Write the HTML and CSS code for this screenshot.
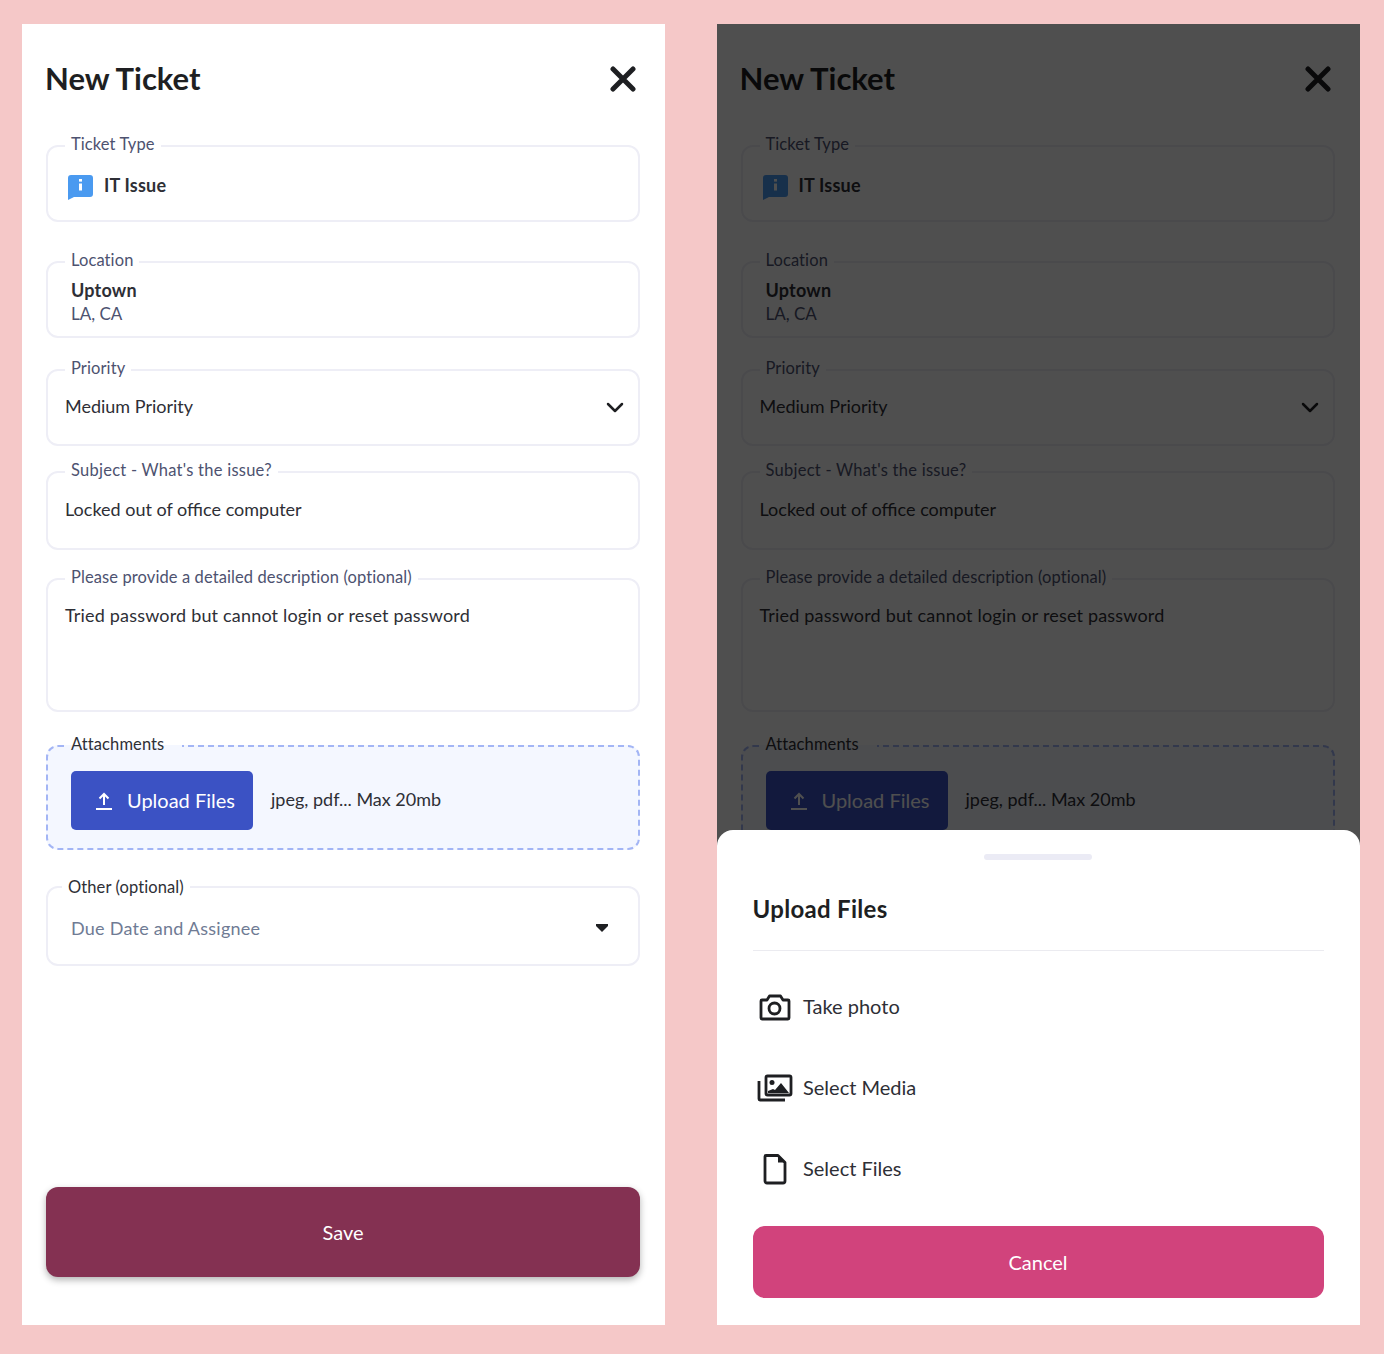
FILE: index.html
```html
<!DOCTYPE html>
<html lang="en">
<head>
<meta charset="UTF-8">
<meta name="viewport" content="width=device-width, initial-scale=1.0">
<title>New Ticket</title>
<link rel="stylesheet" href="styles.css">
</head>
<body>
  <!-- form -->
  <section class="panel">
    <header class="panel-head">
      <h1>New Ticket</h1>
      <svg class="close-icon" viewBox="0 0 26 26"><path d="M3 3l20 20M23 3L3 23"/></svg>
    </header>
    <fieldset class="field">
      <legend>Ticket Type</legend>
      <div class="field-body type-row">
        <svg class="info-icon" viewBox="0 0 26 26"><path d="M4 1h19a3 3 0 0 1 3 3v16a3 3 0 0 1-3 3H7l-6 3V4a3 3 0 0 1 3-3z" fill="#4a9af0"/><rect x="12" y="5" width="3" height="2.6" fill="#fff"/><rect x="12" y="9.5" width="3" height="7" fill="#fff"/></svg>
        <strong>IT Issue</strong>
      </div>
    </fieldset>
    <fieldset class="field field-location">
      <legend>Location</legend>
      <div class="field-body location-body">
        <strong>Uptown</strong>
        <span>LA, CA</span>
      </div>
    </fieldset>
    <fieldset class="field field-priority">
      <legend>Priority</legend>
      <div class="field-body select-row">
        <span>Medium Priority</span>
        <svg class="chevron" viewBox="0 0 18 12"><path d="M2 2l7 7 7-7"/></svg>
      </div>
    </fieldset>
    <fieldset class="field field-subject">
      <legend>Subject - What's the issue?</legend>
      <div class="field-body subject-body">Locked out of office computer</div>
    </fieldset>
    <fieldset class="field field-desc">
      <legend>Please provide a detailed description (optional)</legend>
      <div class="field-body desc-body">Tried password but cannot login or reset password</div>
    </fieldset>
    <fieldset class="field field-attach">
      <legend>Attachments</legend>
      <div class="field-body attach-body">
        <button class="upload-btn">
          <svg class="upload-icon" viewBox="0 0 18 18"><path d="M9 13V2M4.5 6.5L9 2l4.5 4.5M1 17h16"/></svg>
          Upload Files
        </button>
        <span>jpeg, pdf... Max 20mb</span>
      </div>
    </fieldset>
    <fieldset class="field field-other">
      <legend>Other (optional)</legend>
      <div class="field-body other-body">
        <span>Due Date and Assignee</span>
        <svg class="caret" viewBox="0 0 12 8"><path d="M0 0h12v2L6 8 0 2z"/></svg>
      </div>
    </fieldset>
    <button class="save-btn">Save</button>
  </section>

  <!-- same form with the upload sheet open -->
  <section class="panel">
    <header class="panel-head">
      <h1>New Ticket</h1>
      <svg class="close-icon" viewBox="0 0 26 26"><path d="M3 3l20 20M23 3L3 23"/></svg>
    </header>
    <fieldset class="field">
      <legend>Ticket Type</legend>
      <div class="field-body type-row">
        <svg class="info-icon" viewBox="0 0 26 26"><path d="M4 1h19a3 3 0 0 1 3 3v16a3 3 0 0 1-3 3H7l-6 3V4a3 3 0 0 1 3-3z" fill="#4a9af0"/><rect x="12" y="5" width="3" height="2.6" fill="#fff"/><rect x="12" y="9.5" width="3" height="7" fill="#fff"/></svg>
        <strong>IT Issue</strong>
      </div>
    </fieldset>
    <fieldset class="field field-location">
      <legend>Location</legend>
      <div class="field-body location-body">
        <strong>Uptown</strong>
        <span>LA, CA</span>
      </div>
    </fieldset>
    <fieldset class="field field-priority">
      <legend>Priority</legend>
      <div class="field-body select-row">
        <span>Medium Priority</span>
        <svg class="chevron" viewBox="0 0 18 12"><path d="M2 2l7 7 7-7"/></svg>
      </div>
    </fieldset>
    <fieldset class="field field-subject">
      <legend>Subject - What's the issue?</legend>
      <div class="field-body subject-body">Locked out of office computer</div>
    </fieldset>
    <fieldset class="field field-desc">
      <legend>Please provide a detailed description (optional)</legend>
      <div class="field-body desc-body">Tried password but cannot login or reset password</div>
    </fieldset>
    <fieldset class="field field-attach">
      <legend>Attachments</legend>
      <div class="field-body attach-body">
        <button class="upload-btn">
          <svg class="upload-icon" viewBox="0 0 18 18"><path d="M9 13V2M4.5 6.5L9 2l4.5 4.5M1 17h16"/></svg>
          Upload Files
        </button>
        <span>jpeg, pdf... Max 20mb</span>
      </div>
    </fieldset>

    <div class="overlay"></div>
    <div class="sheet">
      <div class="sheet-handle"></div>
      <h2>Upload Files</h2>
      <ul class="sheet-list">
        <li>
          <svg class="sheet-icon" viewBox="0 0 36 36"><path d="M5 10h5l2.5-4h11l2.500 4h5a1 1 0 0 1 1 1v17a1 1 0 0 1-1 1H5a1 1 0 0 1-1-1V11a1 1 0 0 1 1-1z"/><circle cx="17.5" cy="18.5" r="5.5"/></svg>
          <span>Take photo</span>
        </li>
        <li>
          <svg class="sheet-icon" viewBox="0 0 36 36"><rect x="9" y="5" width="25" height="19" rx="1.5"/><path d="M2 10v18a1 1 0 0 0 1 1h25"/><circle cx="15" cy="11.5" r="2.5" class="solid"/><path d="M11 22v-2l5-2 2 1 6-7 8 10z" class="solid"/></svg>
          <span>Select Media</span>
        </li>
        <li>
          <svg class="sheet-icon" viewBox="0 0 36 36"><path d="M9 3.5h12l7 7V29a2 2 0 0 1-2 2H10a2 2 0 0 1-2-2V4.5a1 1 0 0 1 1-1z"/><path d="M21 3.5v7h7z" class="solid"/></svg>
          <span>Select Files</span>
        </li>
      </ul>
      <button class="cancel-btn">Cancel</button>
    </div>
  </section>
</body>
</html>
```

FILE: styles.css
```css
* {
  box-sizing: border-box;
}
body {
  margin: 0;
  padding: 24px 24px 29px 22px;
  display: flex;
  gap: 51.5px;
  background-color: #f5c8c8;
  font-family: "Lato", "Open Sans", sans-serif;
  font-size: 18px;
  color: #2e2f36;
}
.panel {
  position: relative;
  width: 643px;
  height: 1301px;
  padding: 0 25px 48px 24px;
  display: flex;
  flex-direction: column;
  background-color: #fff;
  overflow: hidden;
}
.panel-head {
  height: 111px;
  flex-shrink: 0;
  padding: 0 4px 3px 0;
  display: flex;
  align-items: center;
  justify-content: space-between;
}
.panel-head h1 {
  margin: 0 0 0 -1px;
  font-size: 31px;
  font-weight: 700;
  color: #1e1f22;
}
.close-icon {
  width: 26px;
  height: 26px;
  margin-top: 2px;
  fill: none;
  stroke: #1e1f22;
  stroke-width: 5;
  stroke-linecap: round;
}

/* fields */
.field {
  margin: 0;
  padding: 0;
  min-width: 0;
  border: 2px solid #eeeef6;
  border-radius: 12px;
}
.field legend {
  margin-left: 17px;
  padding: 0 6px 3px;
  font-size: 16.5px;
  line-height: 19px;
  letter-spacing: 0.1px;
  color: #4d5270;
}
.field-location { margin-top: 29px; }
.field-priority { margin-top: 21px; }
.field-subject { margin-top: 15px; }
.field-subject legend { letter-spacing: 0.25px; }
.field-desc { margin-top: 18px; }
.field-attach {
  margin-top: 23px;
  border: 2px dashed #a3b5f5;
  background-color: #f4f7ff;
}
.field-attach legend {
  padding-right: 18px;
  color: #2e2f36;
}
.field-other { margin-top: 26px; }
.field-other legend {
  margin-left: 14px;
  padding-top: 2px;
  padding-bottom: 1px;
  color: #2e2f36;
}
.field-body {
  min-height: 63px;
  padding: 0 14px 13px 17px;
}
.type-row {
  display: flex;
  align-items: center;
  gap: 11px;
  padding: 0 0 7px 19px;
}
.type-row strong,
.location-body strong {
  font-weight: 700;
  letter-spacing: 0.2px;
}
.info-icon {
  width: 26px;
  height: 26px;
  margin-top: 4px;
}
.location-body {
  display: flex;
  flex-direction: column;
  padding: 5px 0 0 23px;
  line-height: 24px;
}
.location-body span {
  font-size: 17px;
  color: #4d5270;
}
.select-row {
  display: flex;
  align-items: center;
  justify-content: space-between;
}
.chevron {
  width: 18px;
  height: 12px;
  margin-top: 3px;
  fill: none;
  stroke: #1e1f22;
  stroke-width: 2.5;
  stroke-linecap: round;
  stroke-linejoin: round;
}
.subject-body {
  min-height: 65px;
  display: flex;
  align-items: center;
}
.desc-body {
  min-height: 120px;
  padding-top: 14px;
  letter-spacing: 0.18px;
}
.attach-body {
  min-height: 91px;
  padding: 14px 0 0 23px;
  display: flex;
  align-items: flex-start;
  gap: 18px;
  line-height: 56px;
}
.upload-btn {
  width: 182px;
  height: 59px;
  padding: 0 0 2px 24px;
  display: flex;
  align-items: center;
  gap: 14px;
  border: none;
  border-radius: 5px;
  background-color: #3b52c4;
  color: #fff;
  font-family: inherit;
  font-size: 20px;
}
.upload-icon {
  width: 18px;
  height: 18px;
  margin-top: 2px;
  fill: none;
  stroke: currentColor;
  stroke-width: 2;
}
.other-body {
  min-height: 66px;
  padding: 0 30px 6px 23px;
  display: flex;
  align-items: center;
  justify-content: space-between;
  letter-spacing: 0.25px;
  color: #6f7b94;
}
.caret {
  width: 12px;
  height: 8px;
  fill: #1e1f22;
}
.save-btn {
  margin-top: auto;
  height: 90px;
  border: none;
  border-radius: 12px;
  background-color: #843152;
  box-shadow: 0 3px 7px rgba(0, 0, 0, 0.3);
  color: #fff;
  font-family: inherit;
  font-size: 20px;
}

/* upload sheet */
.overlay {
  position: absolute;
  top: 0;
  right: 0;
  bottom: 0;
  left: 0;
  background-color: rgba(0, 0, 0, 0.69);
}
.sheet {
  position: absolute;
  left: 0;
  right: 0;
  bottom: 0;
  padding: 24px 36px 27px;
  background-color: #fff;
  border-radius: 16px 16px 0 0;
}
.sheet-handle {
  width: 108px;
  height: 6px;
  margin: 0 auto;
  border-radius: 3px;
  background-color: #ebebf5;
}
.sheet h2 {
  margin: 0;
  height: 91px;
  padding-top: 6px;
  display: flex;
  align-items: center;
  border-bottom: 1px solid #ebebf0;
  font-size: 24px;
  letter-spacing: 0.3px;
  font-weight: 700;
  color: #1e1f22;
}
.sheet-list {
  margin: 16px 0;
  padding: 0;
  list-style: none;
}
.sheet-list li {
  height: 81px;
  display: flex;
  align-items: center;
  gap: 10px;
  padding-left: 4.5px;
  font-size: 20px;
}
.sheet-list span {
  padding-bottom: 4px;
}
.sheet-icon {
  width: 36px;
  height: 36px;
  fill: none;
  stroke: #1e1f22;
  stroke-width: 2.8;
  stroke-linejoin: round;
}
.sheet-icon .solid {
  fill: #1e1f22;
  stroke: none;
}
.cancel-btn {
  width: 100%;
  height: 72px;
  border: none;
  border-radius: 12px;
  background-color: #d1437c;
  color: #fff;
  font-family: inherit;
  font-size: 20px;
}
```
